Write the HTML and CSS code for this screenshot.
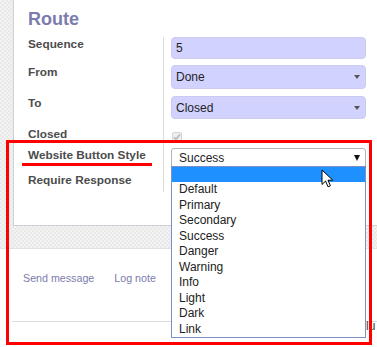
FILE: index.html
```html
<!DOCTYPE html>
<html lang="en">
<head>
    <meta charset="UTF-8">
    <meta name="viewport" content="width=device-width, initial-scale=1.0">
    <title>Route</title>
    <link rel="stylesheet" href="styles.css">
</head>
<body>
    <div class="screen">
        <div class="backdrop">
            <div class="sheet">
                <h1 class="title">Route</h1>
                <div class="form">
                    <div class="label">Sequence</div>
                    <div class="field"><div class="input">5</div></div>

                    <div class="label">From</div>
                    <div class="field"><div class="input select tall">Done<span class="caret"></span></div></div>

                    <div class="label">To</div>
                    <div class="field"><div class="input select">Closed<span class="caret"></span></div></div>

                    <div class="label">Closed</div>
                    <div class="field">
                        <span class="checkbox">
                            <svg width="8" height="8" viewBox="0 0 8 8"><path d="M1 4.2 L3 6.2 L7 1.5" fill="none" stroke="#b8b8b8" stroke-width="1.6"/></svg>
                        </span>
                    </div>

                    <div class="label">Website Button Style</div>
                    <div class="field"><div class="native">Success<span class="caret dark"></span></div></div>

                    <div class="label">Require Response</div>
                    <div class="field"></div>
                </div>
            </div>
        </div>
        <div class="chatter">
            <div class="chatter-bar">
                <a class="chatter-link">Send message</a>
                <a class="chatter-link">Log note</a>
            </div>
            <div class="chatter-line"><span class="follow">lu</span></div>
        </div>

        <ul class="dropdown">
            <li class="active"></li>
            <li>Default</li>
            <li>Primary</li>
            <li>Secondary</li>
            <li>Success</li>
            <li>Danger</li>
            <li>Warning</li>
            <li>Info</li>
            <li>Light</li>
            <li>Dark</li>
            <li>Link</li>
        </ul>

        <svg class="cursor" width="13" height="20" viewBox="0 0 13 20">
            <path d="M1 1 L1 15.5 L4.6 12 L7 17.8 L9.4 16.8 L7 11.2 L11.8 11.2 Z" fill="#fff" stroke="#000" stroke-width="1" stroke-linejoin="round"/>
        </svg>

        <div class="mark-box"></div>
        <div class="mark-line"></div>
    </div>
</body>
</html>
```

FILE: styles.css
```css
* {
    box-sizing: border-box;
}
body {
    margin: 0;
    font-family: "Liberation Sans", Arial, sans-serif;
    background: #fff;
    overflow: hidden;
}
.screen {
    position: relative;
    width: 377px;
    height: 347px;
    overflow: hidden;
}
.backdrop {
    height: 248px;
    padding-left: 13px;
    background-color: #eeeeee;
    background-image: repeating-conic-gradient(#e8e8e8 0 25%, #f3f3f3 0 50%);
    background-size: 4px 4px;
}
.sheet {
    height: 226px;
    background: #fff;
    border-left: 1px solid #cfcfd8;
    border-bottom: 1px solid #cfcfd8;
    padding: 9px 0 0 14px;
}
.title {
    margin: 0;
    font-size: 18px;
    line-height: 20px;
    font-weight: bold;
    color: #7c7bad;
}
.form {
    margin-top: 8px;
    display: grid;
    grid-template-columns: 136px 1fr;
    grid-template-rows: 28px 31px 31px 21px 25px 19px;
}
.label {
    font-size: 11.8px;
    line-height: 15px;
    font-weight: bold;
    color: #4c4c4c;
    border-right: 1px solid #dcdcdc;
}
.field {
    padding-left: 7px;
}
.input {
    width: 195px;
    height: 22px;
    background: #d2d2ff;
    border: 1px solid #cacaf2;
    border-radius: 4px;
    padding: 0 5px 0 4px;
    font-size: 12px;
    line-height: 20px;
    color: #222;
}
.select {
    display: flex;
    justify-content: space-between;
    align-items: center;
    height: 23px;
    line-height: normal;
}
.select.tall {
    height: 24px;
}
.caret {
    width: 0;
    height: 0;
    border-left: 3px solid transparent;
    border-right: 3px solid transparent;
    border-top: 4px solid #555;
}
.caret.dark {
    border-left-width: 3.5px;
    border-right-width: 3.5px;
    border-top: 6px solid #111;
}
.checkbox {
    display: inline-flex;
    align-items: center;
    justify-content: center;
    width: 10px;
    height: 10px;
    margin: 4px 0 0 1px;
    background: #eeeeee;
    border: 1px solid #d6d6d6;
    border-radius: 2px;
}
.native {
    display: flex;
    justify-content: space-between;
    align-items: center;
    width: 195px;
    height: 19px;
    padding: 0 5px 0 7px;
    background: #fff;
    border: 1px solid #b4b4b4;
    border-radius: 3px 3px 0 0;
    font-size: 12px;
    color: #222;
}
.chatter {
    border-top: 1px solid #e2e2e2;
    background: #fff;
}
.chatter-bar {
    display: flex;
    gap: 20px;
    padding: 23px 0 0 23px;
}
.chatter-link {
    font-size: 10.7px;
    line-height: 13px;
    color: #7c7bad;
}
.chatter-line {
    height: 37px;
    margin-left: 12px;
    border-bottom: 1px solid #dcdcdc;
    padding: 31px 0 0 354px;
}
.follow {
    font-size: 12px;
    line-height: 12px;
    color: #444;
}
.dropdown {
    position: absolute;
    left: 171px;
    top: 166px;
    width: 195px;
    margin: 0;
    padding: 0;
    list-style: none;
    background: #fff;
    border: 1px solid #7b8fc2;
}
.dropdown li {
    height: 15.5px;
    line-height: 15.5px;
    padding-left: 7px;
    font-size: 12px;
    color: #222;
}
.dropdown li.active {
    height: 15px;
    background: #1e90ff;
}
.cursor {
    position: absolute;
    left: 321px;
    top: 169px;
}
.mark-box {
    position: absolute;
    left: 6px;
    top: 140px;
    width: 366px;
    height: 205px;
    border: 3px solid #ff0000;
}
.mark-line {
    position: absolute;
    left: 22px;
    top: 163px;
    width: 130px;
    height: 3px;
    background: #ff0000;
}
```
